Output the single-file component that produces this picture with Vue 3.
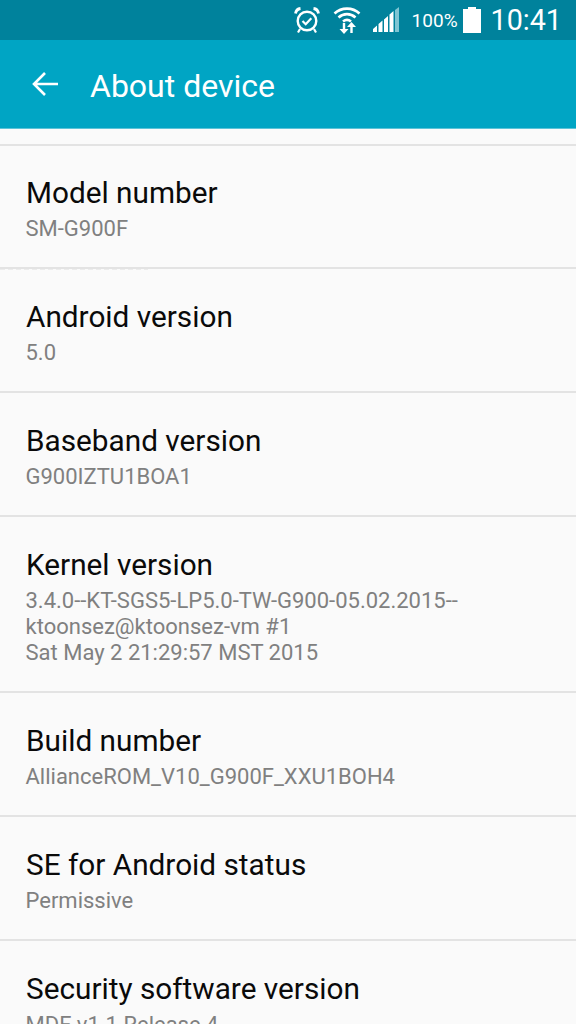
<script setup>
const items = [
  { title: 'Model number', lines: ['SM-G900F'] },
  { title: 'Android version', lines: ['5.0'] },
  { title: 'Baseband version', lines: ['G900IZTU1BOA1'] },
  { title: 'Kernel version', lines: ['3.4.0--KT-SGS5-LP5.0-TW-G900-05.02.2015--', 'ktoonsez@ktoonsez-vm #1', 'Sat May 2 21:29:57 MST 2015'] },
  { title: 'Build number', lines: ['AllianceROM_V10_G900F_XXU1BOH4'] },
  { title: 'SE for Android status', lines: ['Permissive'] },
  { title: 'Security software version', lines: ['MDF v1.1 Release 4'] },
]
</script>

<template>
  <div class="phone">
    <div class="status">
      <svg class="ic alarm" width="26" height="28" viewBox="0 0 26 28" fill="none" stroke="#fff">
        <circle cx="13" cy="15" r="9.3" stroke-width="2.4" />
        <path d="M8.5 15l3.2 3.200 5.600-6" stroke-width="2.200" />
        <path d="M1.500 7.500C2 4.500 4 2.800 6.500 2.500M24.500 7.500C24 4.500 22 2.800 19.500 2.500" stroke-width="2.800" />
        <path d="M6 23l-2 3.500M20 23l2 3.500" stroke-width="2.200" />
      </svg>
      <svg class="ic wifi" width="28" height="30" viewBox="0 0 28 30" fill="none" stroke="#fff" stroke-width="2.600">
        <path d="M1.500 8.500C8.500 2 19.500 2 26.500 8.500" />
        <path d="M5.500 12.500C10.500 8 17.500 8 22.500 12.500" />
        <path d="M10 16.500C12.500 14.500 15.500 14.500 18 16.500" />
        <path d="M11 18v8M18.500 28v-8" stroke-width="2.400" />
        <path d="M6.500 24h9L11 29zM14 22h9l-4.500-5z" fill="#fff" stroke="none" />
      </svg>
      <svg class="ic signal" width="26" height="26" viewBox="0 0 26 26">
        <path d="M0 25v-3l4-3.500V25zM5.500 25v-8l4-3.500V25zM11 25V12.500l4-3.500v16zM16.500 25V7.500l4-3.500v21z" fill="#fff" />
        <path d="M22 25V3l4-3v25z" fill="#7fc5d3" />
      </svg>
      <span class="battery-text">100%</span>
      <svg class="ic battery" width="18" height="26" viewBox="0 0 18 26">
        <path d="M5 0h8v2h5v24H0V2h5z" fill="#fff" />
      </svg>
      <span class="clock">10:41</span>
    </div>
    <header class="bar">
      <svg class="back" width="28" height="26" viewBox="0 0 28 26" fill="none" stroke="#fff" stroke-width="2.600">
        <path d="M27 13H3M14 2 3 13l11 11" />
      </svg>
      <h1>About device</h1>
    </header>
    <main class="list">
      <section v-for="item in items" :key="item.title" class="row">
        <div class="title">{{ item.title }}</div>
        <div class="sub">
          <div v-for="line in item.lines" :key="line">{{ line }}</div>
        </div>
      </section>
    </main>
  </div>
</template>

<style>
html, body { margin: 0; padding: 0; background: #fafafa; overflow: hidden; }
</style>

<style scoped>
.phone {
  width: 576px;
  height: 1024px;
  overflow: hidden;
  background: #fafafa;
  font-family: Roboto, "Liberation Sans", sans-serif;
}
.status {
  height: 40px;
  background: #00829c;
  display: flex;
  align-items: center;
  justify-content: flex-end;
  color: #fff;
  padding-right: 14px;
}
.ic { flex: none; }
.alarm { margin-right: 13.5px; }
.wifi { margin-right: 11.5px; }
.signal { margin-right: 13px; }
.battery-text { font-size: 19px; margin-right: 5px; }
.battery { margin-right: 10px; }
.clock { font-size: 28.7px; }
.bar {
  height: 89px;
  background: #00a5c4;
  display: flex;
  align-items: center;
  padding-left: 31px;
  box-sizing: border-box;
  border-bottom: 1px solid #5cc3d8;
}
.back { margin-right: 31px; }
h1 {
  margin: 0;
  padding-top: 3px;
  color: #fff;
  font-size: 32px;
  font-weight: 400;
}
.list {
  padding-top: 15px;
}
.row {
  border-top: 2px solid #e3e3e3;
  padding: 29px 26px 25px;
  box-sizing: border-box;
}
.row:first-child {
  position: relative;
  padding-top: 28px;
}
.row:first-child::after {
  content: "";
  position: absolute;
  left: 0;
  bottom: -3px;
  width: 148px;
  height: 1px;
  background: repeating-linear-gradient(90deg, #ececec 0 5px, #fafafa 5px 8px);
}
.title {
  font-size: 29.75px;
  line-height: 38px;
  color: #0a0a0a;
}
.sub {
  margin-top: 4px;
  margin-left: -0.5px;
  font-size: 22px;
  line-height: 26px;
  color: #808080;
}
</style>
